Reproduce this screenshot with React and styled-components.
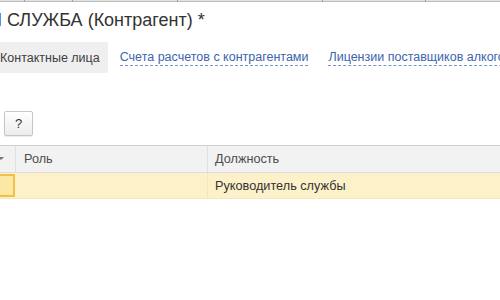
import React from "react";
import styled, { createGlobalStyle } from "styled-components";

const GlobalStyle = createGlobalStyle`
  html, body { margin: 0; padding: 0; background: #fff; }
  body {
    font-family: Arial, "Liberation Sans", sans-serif;
    color: #333;
    overflow: hidden;
    width: 500px;
    height: 300px;
  }
`;

const Page = styled.div`
  width: 500px;
  height: 300px;
  overflow: hidden;
  display: flex;
  flex-direction: column;
`;

const TopStrip = styled.div`
  display: flex;
  height: 2px;
  flex-shrink: 0;
`;

const StripSegment = styled.div`
  width: ${(p) => p.$w}px;
  flex-shrink: 0;
  background: #e2e2e2;
  border-bottom: 1px solid #bdbdbd;
  border-right: 1px solid #9a9a9a;
`;

const Title = styled.h1`
  margin: 7px 0 0 -11px;
  font-size: 18px;
  line-height: 22px;
  font-weight: normal;
  color: #333;
  white-space: nowrap;
`;

const Tabs = styled.div`
  display: flex;
  align-items: stretch;
  gap: 4px;
  height: 31px;
  margin: 11px 0 0 -8px;
  white-space: nowrap;
`;

const Tab = styled.div`
  display: flex;
  align-items: center;
  padding: 0 8px;
  font-size: 12.5px;
  border-radius: 2px;
  flex-shrink: 0;
  background: ${(p) => (p.$active ? "#efefef" : "transparent")};
  color: ${(p) => (p.$active ? "#404040" : "#3d65ad")};
`;

const TabLink = styled.span`
  border-bottom: 1px dashed #7b95c6;
  line-height: 15px;
  margin-top: 1px;
`;

const ButtonRow = styled.div`
  display: flex;
  margin: 38px 0 0 4px;
`;

const HelpButton = styled.button`
  width: 29px;
  height: 25px;
  padding: 0;
  font-family: Arial, "Liberation Sans", sans-serif;
  font-size: 13px;
  color: #333;
  border: 1px solid #c6c6c6;
  border-radius: 2px;
  background: linear-gradient(#ffffff, #ececec);
  box-shadow: 0 1px 1px rgba(0, 0, 0, 0.08);
`;

const Table = styled.div`
  margin-top: 9px;
  display: flex;
  flex-direction: column;
  width: 700px;
`;

const HeaderRow = styled.div`
  display: grid;
  grid-template-columns: 16px 192px 1fr;
  height: 26px;
  background: #f2f2f2;
  border-top: 1px solid #cfcfcf;
  border-bottom: 1px solid #dedede;
`;

const HeaderCell = styled.div`
  display: flex;
  align-items: center;
  padding-left: ${(p) => p.$pad ?? 8}px;
  font-size: 12.7px;
  color: #4d4d4d;
  border-right: 1px solid #e0e0e0;
  position: relative;
  overflow: hidden;
`;

const SortMark = styled.span`
  position: absolute;
  left: -2px;
  top: 11px;
  width: 0;
  height: 0;
  border-left: 3px solid transparent;
  border-right: 3px solid transparent;
  border-top: 3px solid #777;
`;

const DataRow = styled.div`
  display: grid;
  grid-template-columns: 16px 192px 1fr;
  height: 25px;
  background: #fdf1c9;
  border-bottom: 1px solid #f4e8c2;
`;

const DataCell = styled.div`
  display: flex;
  align-items: center;
  padding-left: ${(p) => p.$pad ?? 8}px;
  font-size: 12.7px;
  color: #333;
  border-right: 1px solid #f6e6b8;
  white-space: nowrap;
`;

const SelectedCell = styled.div`
  margin: 1px 1px 1px 0;
  background: #fde7a4;
  border: 2px solid #f3c047;
  border-left: none;
`;

export default function App() {
  return (
    <>
      <GlobalStyle />
      <Page>
        <TopStrip>
          {[24, 47, 104, 144, 102, 120].map((w, i) => (
            <StripSegment key={i} $w={w} />
          ))}
        </TopStrip>
        <Title>И СЛУЖБА (Контрагент) *</Title>
        <Tabs>
          <Tab $active>Контактные лица</Tab>
          <Tab>
            <TabLink>Счета расчетов с контрагентами</TabLink>
          </Tab>
          <Tab>
            <TabLink>Лицензии поставщиков алкогольной продукции</TabLink>
          </Tab>
        </Tabs>
        <ButtonRow>
          <HelpButton>?</HelpButton>
        </ButtonRow>
        <Table>
          <HeaderRow>
            <HeaderCell $pad={0}>
              <SortMark />
            </HeaderCell>
            <HeaderCell>Роль</HeaderCell>
            <HeaderCell $pad={7}>Должность</HeaderCell>
          </HeaderRow>
          <DataRow>
            <SelectedCell />
            <DataCell />
            <DataCell $pad={7}>Руководитель службы</DataCell>
          </DataRow>
        </Table>
      </Page>
    </>
  );
}
